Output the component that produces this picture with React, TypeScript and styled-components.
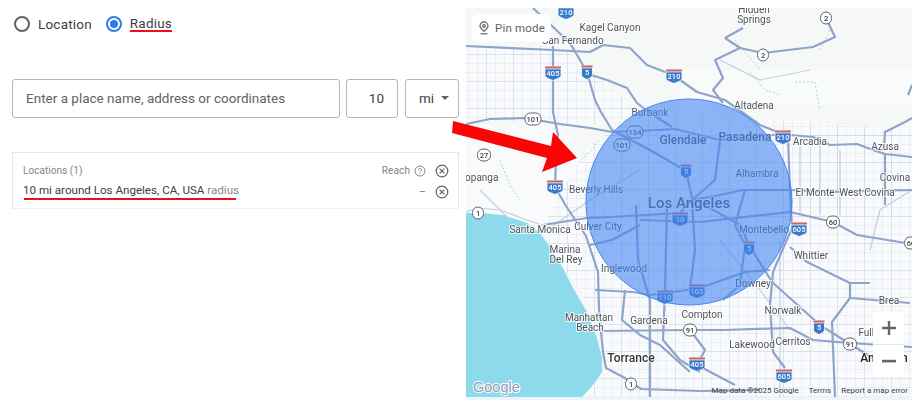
import styled, { createGlobalStyle } from 'styled-components'

const GlobalStyle = createGlobalStyle`
  html, body {
    margin: 0;
    padding: 0;
    background: #fff;
    font-family: Roboto, 'Liberation Sans', sans-serif;
  }
`

const Page = styled.div`
  position: relative;
  display: flex;
  width: 922px;
  height: 410px;
  overflow: hidden;
`

const LeftPanel = styled.div`
  width: 466px;
  flex-shrink: 0;
  padding: 14px 7px 0 12px;
  box-sizing: border-box;
  display: flex;
  flex-direction: column;
`

const RadioRow = styled.div`
  display: flex;
  align-items: center;
  height: 19px;
  padding-left: 2px;
  gap: 14px;
`

const RadioItem = styled.label`
  display: flex;
  align-items: center;
  gap: 8px;
  font-size: 13.5px;
  letter-spacing: 0.2px;
  color: #3c4043;
`

const RadioDot = styled.span<{ $checked?: boolean }>`
  width: 16px;
  height: 16px;
  box-sizing: border-box;
  border-radius: 50%;
  border: 2px solid ${(p) => (p.$checked ? '#2f7be5' : '#5f6368')};
  display: flex;
  align-items: center;
  justify-content: center;

  &::after {
    content: '';
    display: ${(p) => (p.$checked ? 'block' : 'none')};
    width: 8px;
    height: 8px;
    border-radius: 50%;
    background: #2f7be5;
  }
`

const Underlined = styled.span`
  border-bottom: 2px solid #e8101c;
  line-height: 14px;
`

const SearchRow = styled.div`
  display: flex;
  margin-top: 46px;
  gap: 6px;
`

const Field = styled.input<{ $width: number; $align?: string }>`
  width: ${(p) => p.$width}px;
  height: 38.5px;
  box-sizing: border-box;
  border: 1px solid #b4b7bb;
  border-radius: 3px;
  padding: 0 13px;
  font-family: inherit;
  font-size: 13.5px;
  color: #3c4043;
  text-align: ${(p) => p.$align ?? 'left'};
  outline: none;

  &::placeholder {
    color: #5f6368;
    opacity: 1;
  }
`

const UnitSelect = styled.div`
  width: 54px;
  height: 38.5px;
  margin-left: 1px;
  box-sizing: border-box;
  border: 1px solid #b4b7bb;
  border-radius: 3px;
  padding-left: 13px;
  display: flex;
  align-items: center;
  gap: 7px;
  font-size: 13.5px;
  color: #3c4043;

  &::after {
    content: '';
    border-left: 4px solid transparent;
    border-right: 4px solid transparent;
    border-top: 4px solid #5f6368;
  }
`

const LocationsCard = styled.div`
  margin-top: 34.5px;
  height: 57px;
  box-sizing: border-box;
  border: 1px solid #e3e5e8;
  border-bottom-color: #f0f1f2;
  padding: 10px 9px 0 10px;
  display: flex;
  flex-direction: column;
  gap: 6px;
`

const CardRow = styled.div`
  display: flex;
  align-items: center;
  justify-content: space-between;
  height: 15px;
`

const CardHeading = styled.span`
  font-size: 10px;
  letter-spacing: 0.05px;
  color: #80868b;
`

const CardActions = styled.div`
  display: flex;
  align-items: center;
  gap: 3px;
`

const ReachLabel = styled.span`
  font-size: 10px;
  letter-spacing: 0.1px;
  color: #80868b;
  margin-right: 1px;
`

const HelpSlot = styled.span`
  display: flex;
  margin-right: 6px;
`

const Dash = styled.span`
  font-size: 11px;
  color: #80868b;
  margin-right: 6px;
`

const TargetName = styled.span`
  position: relative;
  margin-top: -3px;
  font-size: 11.6px;
  color: #3c4043;

  &::after {
    content: '';
    position: absolute;
    left: 1px;
    bottom: -3px;
    width: 212px;
    height: 2px;
    background: #e8101c;
  }
`

const RadiusTag = styled.span`
  color: #80868b;
`

const MapPanel = styled.div`
  position: relative;
  width: 446px;
  height: 389px;
  margin-top: 8px;
  overflow: hidden;
  background: #f6f7f8;
  box-shadow: 0 3px 0 #eef4fb;
`

const MapDrawing = styled.svg`
  display: block;
  filter: blur(0.35px);
`

const MapLabel = styled.text<{ $size?: number; $weight?: number; $color?: string }>`
  font-family: Roboto, 'Liberation Sans', sans-serif;
  font-size: ${(p) => p.$size ?? 10}px;
  font-weight: ${(p) => p.$weight ?? 400};
  fill: ${(p) => p.$color ?? '#4f5358'};
  text-anchor: middle;
  stroke: #fff;
  stroke-width: 2px;
  paint-order: stroke;
  stroke-opacity: 0.8;
`

const ShieldText = styled.text<{ $color: string }>`
  font-family: Roboto, 'Liberation Sans', sans-serif;
  font-size: 7.5px;
  font-weight: 500;
  fill: ${(p) => p.$color};
  text-anchor: middle;
`

const PinButton = styled.div`
  position: absolute;
  top: 6px;
  left: 6px;
  width: 79px;
  height: 28px;
  background: #fff;
  border-radius: 7px;
  display: flex;
  align-items: center;
  justify-content: center;
  gap: 5px;
  font-size: 11.5px;
  letter-spacing: 0.2px;
  color: #5f6368;
`

const GoogleMark = styled.span`
  position: absolute;
  left: 7px;
  bottom: 2px;
  font-family: 'Liberation Sans', sans-serif;
  font-size: 14.5px;
  color: #8d9db5;
  -webkit-text-stroke: 2px #fff;
  paint-order: stroke fill;
`

const ZoomControl = styled.div`
  position: absolute;
  right: 8px;
  top: 304px;
  width: 31px;
  height: 65px;
  background: #fff;
  display: flex;
  flex-direction: column;
`

const ZoomButton = styled.div`
  flex: 1;
  display: flex;
  align-items: center;
  justify-content: center;

  & + & {
    border-top: 1px solid #e6e6e6;
  }
`

const Attribution = styled.div`
  position: absolute;
  right: 4px;
  bottom: 1px;
  display: flex;
  gap: 10px;
  font-size: 8px;
  line-height: 11px;
  color: #3c4043;
`

const ArrowOverlay = styled.svg`
  position: absolute;
  left: 0;
  top: 0;
  pointer-events: none;
`

const gridBlocks = [
  '466,46 560,46 600,78 640,112 600,125 466,120',
  '466,215 540,232 585,150 640,110 790,120 912,130 912,397 585,397 605,340 585,300 560,262',
  '800,128 912,128 912,215 800,215',
]

const majorRoads = [
  '553,46 553,112 558,135 556,160 555,187 566,206 586,236 598,272 599,310 603,352 606,368 625,378 641,389 700,391 760,390',
  '466,124 490,119 525,118 560,124 590,128 612,132 640,131 675,129 720,140 772,135 790,135',
  '533,8 552,26 570,43 587,72 595,100 601,112 612,130 650,150 686,171 692,198 740,225 749,245 772,282 820,325 850,344 876,360',
  '588,74 607,80 627,88 637,103 650,113 672,127',
  '466,46 553,50 590,52 603,45 630,48 647,65 673,75 697,92 725,100 760,125 780,133',
  '790,135 813,137 830,145 857,144 873,150 885,154 912,157',
  '788,137 790,192 792,228 773,272 770,305 773,352 785,368',
  '543,225 587,218 610,217 680,213 692,200 720,195 743,190 790,190 830,192 912,190',
  '640,220 700,222 790,212 833,222 857,235 912,244',
  '667,205 665,290 663,340 680,360 700,372',
  '595,290 633,292 650,295 667,293 700,288 745,272 770,270',
  '603,331 690,330 723,330 790,328 813,340 850,343 912,347',
  '790,247 807,262 850,283 870,283',
  '850,283 850,298 910,303',
  '850,298 832,322 835,397',
  '725,38 740,48 763,53 813,47 835,37 826,18',
  '740,48 715,60 723,78 713,90 723,103',
  '725,38 743,28',
  '690,330 705,350 697,365 735,385',
  '636,205 638,260 650,300 650,397',
  '625,290 622,320 640,335 660,345 690,372',
  '590,245 612,240 640,225',
  '720,140 715,180 692,200 695,250 690,288',
  '745,190 735,225 745,245 740,285 723,300',
  '885,154 885,205',
  '908,95 912,85',
  '912,118 905,122 885,132 884,150',
]

const minorRoads = [
  '466,212 478,208 500,210 527,220 545,226',
  '800,140 800,215',
  '820,140 820,215',
  '840,150 840,215',
  '780,240 780,397',
  '870,250 880,210 912,190',
  '720,240 760,290 790,330',
  '540,235 590,200 640,170',
  '720,60 760,80 810,70',
  '480,190 510,220',
]

const greenTrails = [
  '500,160 510,185 520,200',
  '750,72 765,90 780,95',
  '795,82 815,82 820,110',
  '830,30 820,50',
  '735,40 760,70',
  '582,160 600,140',
]

const interstates = [
  { x: 566, y: 12, n: '210' },
  { x: 553, y: 73, n: '405' },
  { x: 587, y: 72, n: '5' },
  { x: 674, y: 76, n: '210' },
  { x: 555, y: 187, n: '405' },
  { x: 686, y: 171, n: '5' },
  { x: 783, y: 137, n: '210' },
  { x: 680, y: 219, n: '10' },
  { x: 665, y: 297, n: '110' },
  { x: 697, y: 291, n: '105' },
  { x: 799, y: 229, n: '605' },
  { x: 749, y: 248, n: '5' },
  { x: 819, y: 327, n: '5' },
  { x: 697, y: 364, n: '405' },
  { x: 784, y: 376, n: '605' },
]

const stateRoutes = [
  { x: 533, y: 119, n: '101' },
  { x: 635, y: 132, n: '134' },
  { x: 622, y: 145, n: '101' },
  { x: 484, y: 155, n: '27' },
  { x: 478, y: 213, n: '1' },
  { x: 631, y: 384, n: '1' },
  { x: 690, y: 330, n: '91' },
  { x: 833, y: 222, n: '60' },
  { x: 850, y: 344, n: '91' },
  { x: 826, y: 18, n: '2' },
  { x: 763, y: 55, n: '2' },
  { x: 911, y: 243, n: '60' },
]

const places = [
  { x: 610, y: 31, t: 'Kagel Canyon' },
  { x: 573, y: 44, t: 'San Fernando' },
  { x: 650, y: 116, t: 'Burbank' },
  { x: 683, y: 144, t: 'Glendale', size: 12, weight: 500 },
  { x: 745, y: 141, t: 'Pasadena', size: 12, weight: 500 },
  { x: 754, y: 109, t: 'Altadena' },
  { x: 810, y: 145, t: 'Arcadia' },
  { x: 885, y: 150, t: 'Azusa' },
  { x: 895, y: 181, t: 'Covina' },
  { x: 815, y: 196, t: 'El Monte' },
  { x: 867, y: 196, t: 'West Covina' },
  { x: 757, y: 177, t: 'Alhambra' },
  { x: 689, y: 208, t: 'Los Angeles', size: 15, weight: 500 },
  { x: 596, y: 193, t: 'Beverly Hills' },
  { x: 479, y: 181, t: 'Topanga' },
  { x: 540, y: 233, t: 'Santa Monica' },
  { x: 598, y: 230, t: 'Culver City' },
  { x: 565, y: 253, t: 'Marina' },
  { x: 566, y: 263, t: 'Del Rey' },
  { x: 624, y: 272, t: 'Inglewood' },
  { x: 589, y: 321, t: 'Manhattan' },
  { x: 590, y: 331, t: 'Beach' },
  { x: 649, y: 324, t: 'Gardena' },
  { x: 702, y: 318, t: 'Compton' },
  { x: 631, y: 362, t: 'Torrance', size: 12, weight: 500, color: '#33363a' },
  { x: 764, y: 233, t: 'Montebello' },
  { x: 753, y: 287, t: 'Downey' },
  { x: 811, y: 259, t: 'Whittier' },
  { x: 889, y: 304, t: 'Brea' },
  { x: 783, y: 314, t: 'Norwalk' },
  { x: 752, y: 348, t: 'Lakewood' },
  { x: 793, y: 345, t: 'Cerritos' },
  { x: 878, y: 336, t: 'Fullerton' },
  { x: 884, y: 362, t: 'Anaheim', size: 12, weight: 500, color: '#202124' },
  { x: 754, y: 13, t: 'Hidden' },
  { x: 754, y: 23, t: 'Springs' },
]

function CloseCircle() {
  return (
    <svg width='14' height='14' viewBox='0 0 14 14' fill='none' stroke='#5f6368' strokeWidth='1.2'>
      <circle cx='7' cy='7' r='5.8' />
      <path d='M4.6 4.6l4.8 4.8M9.4 4.6L4.6 9.4' />
    </svg>
  )
}

function HelpCircle() {
  return (
    <svg width='12' height='12' viewBox='0 0 12 12' fill='none' stroke='#80868b' strokeWidth='1'>
      <circle cx='6' cy='6' r='5' />
      <path d='M4.5 4.8a1.5 1.5 0 1 1 2.3 1.3c-.5.3-.8.6-.8 1.1' />
      <path d='M6 8.2v.8' />
    </svg>
  )
}

function InterstateShield({ x, y, n }: { x: number; y: number; n: string }) {
  const half = n.length > 1 ? 8 : 5.5
  return (
    <g transform={`translate(${x} ${y})`}>
      <path
        d={`M${-half} -6.5H${half}V2.5C${half} 5 3 6 0 7.5C-3 6 ${-half} 5 ${-half} 2.5Z`}
        fill='#3a78c9'
        stroke='#fff'
        strokeWidth='0.8'
      />
      <rect x={-half} y='-6.5' width={half * 2} height='2' fill='#d9605a' />
      <rect x={-half} y='-4.5' width={half * 2} height='0.8' fill='#fff' />
      <ShieldText $color='#fff' x='0' y='3'>
        {n}
      </ShieldText>
    </g>
  )
}

function StateShield({ x, y, n }: { x: number; y: number; n: string }) {
  const width = n.length > 2 ? 16 : n.length > 1 ? 13 : 11
  return (
    <g transform={`translate(${x} ${y})`}>
      <rect
        x={-width / 2}
        y='-6'
        width={width}
        height='12'
        rx='5.5'
        fill='#fff'
        stroke='#5f6368'
        strokeWidth='1'
      />
      <ShieldText $color='#3c4043' x='0' y='2.7'>
        {n}
      </ShieldText>
    </g>
  )
}

function MapArt() {
  return (
    <MapDrawing width='446' height='389' viewBox='466 8 446 389'>
      <defs>
        <pattern id='streets' width='9' height='9' patternUnits='userSpaceOnUse'>
          <rect width='9' height='9' fill='#f9fafb' />
          <path d='M9 0H0V9' fill='none' stroke='#dfe4ed' strokeWidth='1' />
        </pattern>
        <pattern id='avenues' width='27' height='27' patternUnits='userSpaceOnUse'>
          <path d='M27 0H0V27' fill='none' stroke='#cdd6e6' strokeWidth='1' />
        </pattern>
      </defs>
      <rect x='466' y='8' width='446' height='389' fill='#f6f7f7' />
      <rect x='680' y='70' width='232' height='35' fill='#f9fafa' />
      <polygon points='466,125 560,125 585,160 550,225 466,212' fill='#f9fafb' />
      {gridBlocks.map((points) => (
        <polygon key={points} points={points} fill='url(#streets)' />
      ))}
      {gridBlocks.map((points) => (
        <polygon key={`a${points}`} points={points} fill='url(#avenues)' />
      ))}
      <polygon
        points='466,213 480,213 503,215 527,223 540,233 550,247 563,268 573,288 587,312 597,338 602,358 602,372 593,385 582,397 466,397'
        fill='#8ddaed'
      />
      {greenTrails.map((points) => (
        <polyline
          key={points}
          points={points}
          fill='none'
          stroke='#9ddccb'
          strokeWidth='1'
          strokeDasharray='2 2'
        />
      ))}
      {minorRoads.map((points) => (
        <polyline key={points} points={points} fill='none' stroke='#c3cee2' strokeWidth='1.2' />
      ))}
      {majorRoads.map((points) => (
        <polyline
          key={points}
          points={points}
          fill='none'
          stroke='#8ea4cb'
          strokeWidth='2.2'
          strokeLinejoin='round'
        />
      ))}
      {places.map((p) => (
        <MapLabel key={p.t} x={p.x} y={p.y} $size={p.size} $weight={p.weight} $color={p.color}>
          {p.t}
        </MapLabel>
      ))}
      {interstates.map((s) => (
        <InterstateShield key={`${s.x}-${s.y}`} {...s} />
      ))}
      {stateRoutes.map((s) => (
        <StateShield key={`${s.x}-${s.y}`} {...s} />
      ))}
      <circle cx='689' cy='202' r='103' fill='#4285f4' fillOpacity='0.6' stroke='#4a86ee' />
    </MapDrawing>
  )
}

function App() {
  return (
    <Page>
      <GlobalStyle />
      <LeftPanel>
        <RadioRow>
          <RadioItem>
            <RadioDot />
            Location
          </RadioItem>
          <RadioItem>
            <RadioDot $checked />
            <Underlined>Radius</Underlined>
          </RadioItem>
        </RadioRow>
        <SearchRow>
          <Field $width={328} placeholder='Enter a place name, address or coordinates' readOnly />
          <Field $width={52} $align='right' value='10' readOnly />
          <UnitSelect>mi</UnitSelect>
        </SearchRow>
        <LocationsCard>
          <CardRow>
            <CardHeading>Locations (1)</CardHeading>
            <CardActions>
              <ReachLabel>Reach</ReachLabel>
              <HelpSlot>
                <HelpCircle />
              </HelpSlot>
              <CloseCircle />
            </CardActions>
          </CardRow>
          <CardRow>
            <TargetName>
              10 mi around Los Angeles, CA, USA <RadiusTag>radius</RadiusTag>
            </TargetName>
            <CardActions>
              <Dash>–</Dash>
              <CloseCircle />
            </CardActions>
          </CardRow>
        </LocationsCard>
      </LeftPanel>
      <MapPanel>
        <MapArt />
        <PinButton>
          <svg width='12' height='14' viewBox='0 0 12 14' fill='none' stroke='#5f6368' strokeWidth='1.2'>
            <path d='M6 10.2C4 8.4 2 6.8 2 4.9a4 4 0 0 1 8 0c0 1.9-2 3.5-4 5.3Z' />
            <circle cx='6' cy='5' r='1.3' />
            <path d='M2.5 12.8h7' />
          </svg>
          Pin mode
        </PinButton>
        <GoogleMark>Google</GoogleMark>
        <ZoomControl>
          <ZoomButton>
            <svg width='16' height='16' viewBox='0 0 16 16' fill='#666'>
              <path d='M6.8 1h2.4v5.8H15v2.4H9.2V15H6.8V9.2H1V6.8h5.8Z' />
            </svg>
          </ZoomButton>
          <ZoomButton>
            <svg width='16' height='16' viewBox='0 0 16 16' fill='#666'>
              <rect x='1' y='6.8' width='14' height='2.6' />
            </svg>
          </ZoomButton>
        </ZoomControl>
        <Attribution>
          <span>Map data ©2025 Google</span>
          <span>Terms</span>
          <span>Report a map error</span>
        </Attribution>
      </MapPanel>
      <ArrowOverlay width='922' height='410' viewBox='0 0 922 410'>
        <polygon points='453,121 551,146 553,132 577,158 542,172 547,158 452,133' fill='#fa0505' />
      </ArrowOverlay>
    </Page>
  )
}

export default App
